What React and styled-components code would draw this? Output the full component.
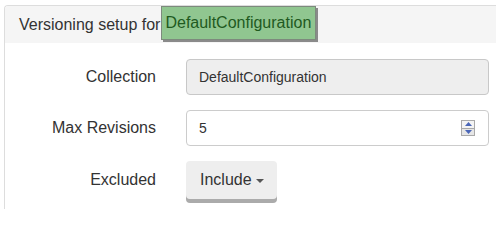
import React from 'react';
import styled, { createGlobalStyle } from 'styled-components';

const Global = createGlobalStyle`
    html, body {
        margin: 0;
        padding: 0;
        background: #fff;
        overflow: hidden;
    }
    body {
        font-family: "Liberation Sans", Arial, sans-serif;
        color: #333;
    }
`;

const Page = styled.div`
    height: 209px;
    overflow: hidden;
    padding: 5px 0 0 4px;
    box-sizing: border-box;
`;

const Panel = styled.div`
    height: 100%;
    border: 1px solid #ddd;
    border-right: 0;
    border-bottom: 0;
    border-radius: 4px 0 0 0;
    background: #fff;
`;

const Heading = styled.div`
    display: flex;
    align-items: center;
    height: 37px;
    padding-left: 14px;
    background: #f5f5f5;
    border-radius: 3px 0 0 0;
    font-size: 16px;
    color: #333;
`;

const Badge = styled.span`
    display: inline-flex;
    align-items: center;
    height: 32px;
    margin-left: 1px;
    margin-top: -3px;
    padding: 0 4px 0 3px;
    background: #90c690;
    border: 1px solid #7d8a7d;
    box-shadow: 2px 2px 0 #8a8a8a;
    color: #1f5a1f;
    font-size: 16px;
`;

const Body = styled.div`
    display: flex;
    flex-direction: column;
    gap: 15px;
    padding-top: 16px;
`;

const Row = styled.div`
    display: flex;
    align-items: center;
    gap: 30px;
`;

const Label = styled.label`
    width: 151px;
    text-align: right;
    font-size: 16px;
    color: #333;
    margin-top: ${p => p.$shift || 0}px;
`;

const Field = styled.div`
    display: flex;
    align-items: center;
    box-sizing: border-box;
    width: 303px;
    height: 36px;
    padding: 0 13px 0 12px;
    border: 1px solid ${p => (p.$disabled ? '#c8c8c8' : '#ccc')};
    border-radius: 4px;
    background: ${p => (p.$disabled ? '#eee' : '#fff')};
`;

const Input = styled.input`
    flex: 1;
    min-width: 0;
    border: 0;
    outline: 0;
    padding: 0;
    background: transparent;
    font-family: inherit;
    font-size: 14px;
    color: #333;
`;

const Spinner = styled.div`
    display: flex;
    flex-direction: column;
    width: 14px;
    height: 16px;
    border: 1px solid #a9a9a9;
    box-sizing: border-box;
`;

const SpinHalf = styled.div`
    flex: 1;
    display: flex;
    align-items: center;
    justify-content: center;
    background: ${p => (p.$down ? '#e6e6e6' : '#f4f4f4')};
    border-top: ${p => (p.$down ? '1px solid #a9a9a9' : '0')};
`;

const Button = styled.button`
    display: inline-flex;
    align-items: center;
    gap: 4px;
    height: 38px;
    margin-bottom: 4px;
    padding: 0 13px 0 14px;
    border: 0;
    border-radius: 4px;
    background: #eee;
    box-shadow: 0 4px 0 #ababab;
    font-family: inherit;
    font-size: 16px;
    color: #333;
`;

const Caret = styled.span`
    width: 0;
    height: 0;
    margin-top: 2px;
    border-left: 4px solid transparent;
    border-right: 4px solid transparent;
    border-top: 4px solid #555;
`;

const Tri = ({ down }) => (
    <svg width="7" height="4" viewBox="0 0 7 4">
        <path d={down ? 'M0 0 L7 0 L3.5 4 Z' : 'M0 4 L7 4 L3.5 0 Z'} fill="#4a66b8" />
    </svg>
);

export default function App() {
    return (
        <Page>
            <Global />
            <Panel>
                <Heading>
                    Versioning setup for
                    <Badge>DefaultConfiguration</Badge>
                </Heading>
                <Body>
                    <Row>
                        <Label>Collection</Label>
                        <Field $disabled>
                            <Input value="DefaultConfiguration" disabled readOnly />
                        </Field>
                    </Row>
                    <Row>
                        <Label>Max Revisions</Label>
                        <Field>
                            <Input value="5" readOnly />
                            <Spinner>
                                <SpinHalf><Tri /></SpinHalf>
                                <SpinHalf $down><Tri down /></SpinHalf>
                            </Spinner>
                        </Field>
                    </Row>
                    <Row>
                        <Label $shift={-4}>Excluded</Label>
                        <div>
                            <Button>Include <Caret /></Button>
                        </div>
                    </Row>
                </Body>
            </Panel>
        </Page>
    );
}
